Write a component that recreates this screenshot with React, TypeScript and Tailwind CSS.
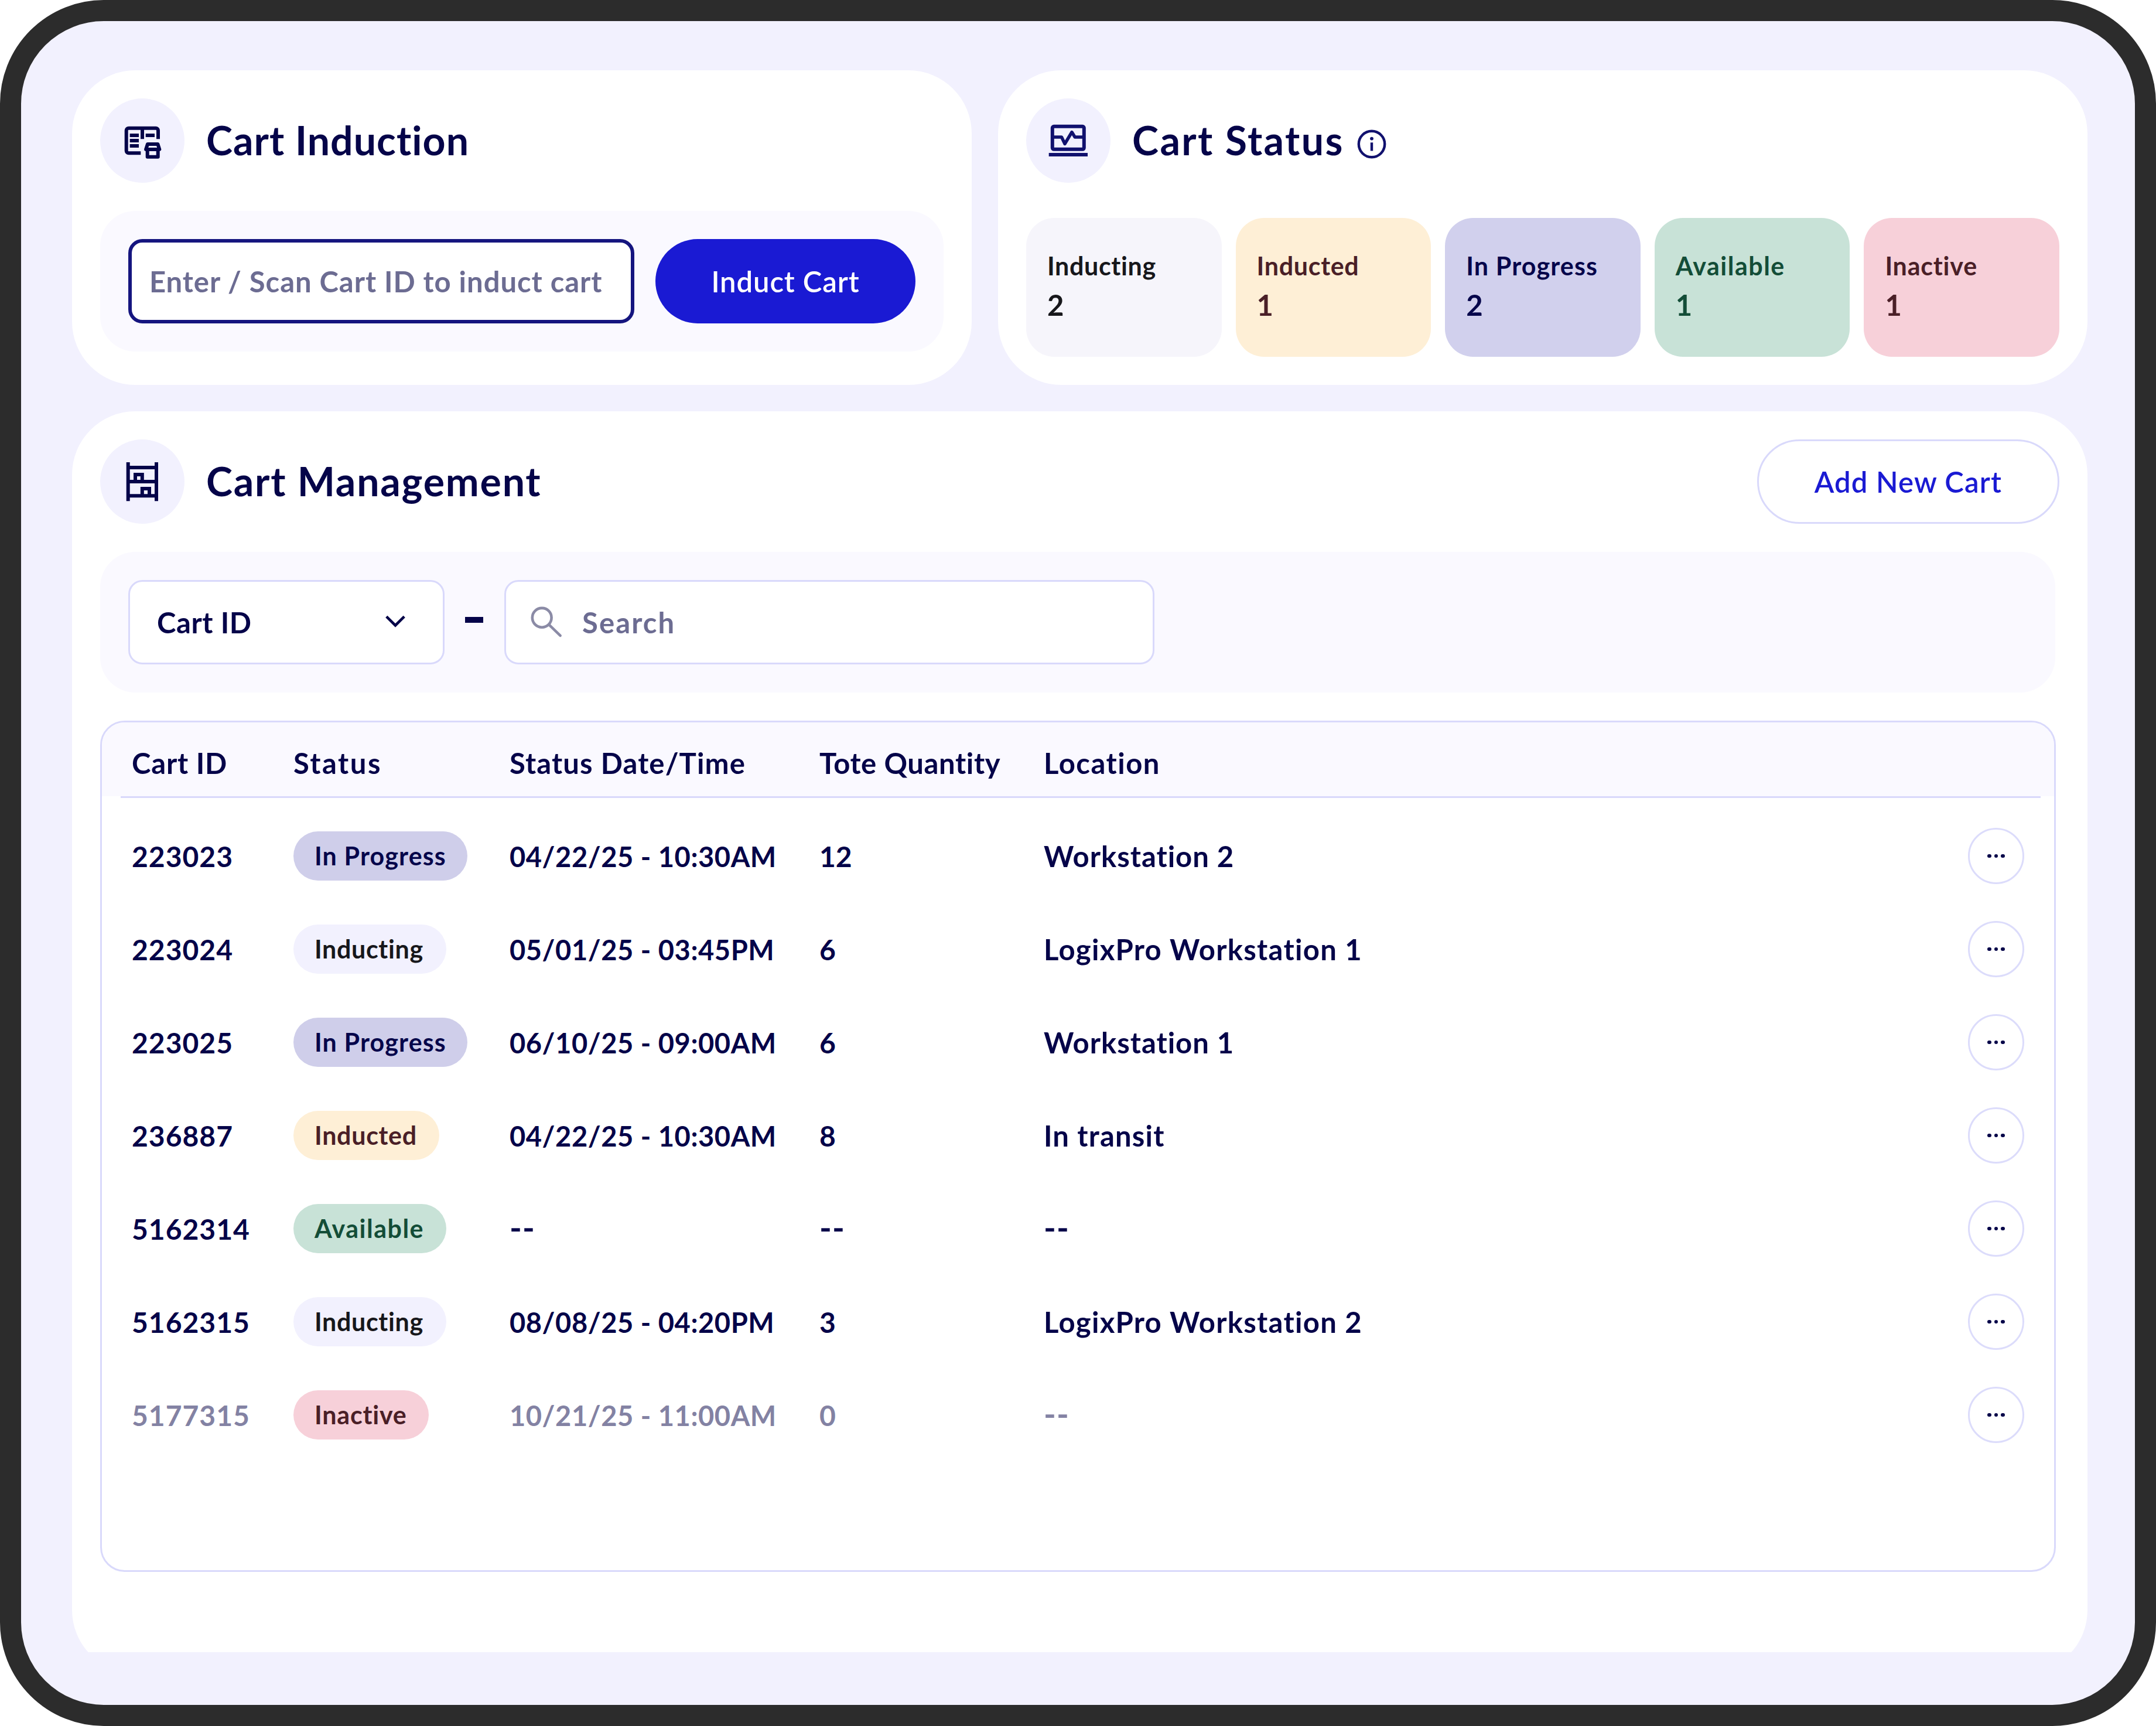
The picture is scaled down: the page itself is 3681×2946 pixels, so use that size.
import type { ReactNode } from 'react';

type StatusName = 'Inducting' | 'Inducted' | 'In Progress' | 'Available' | 'Inactive';

const statusText: Record<StatusName, string> = {
  Inducting: 'text-[#17171b] tracking-[0.65px]',
  Inducted: 'text-[#4a1f27] tracking-[0.7px]',
  'In Progress': 'text-[#06064b] tracking-[1.15px]',
  Available: 'text-[#134d37] tracking-[1.5px]',
  Inactive: 'text-[#4a1f27] tracking-[0.8px]',
};

const cardColor: Record<StatusName, string> = {
  Inducting: 'bg-[#f6f5fb]',
  Inducted: 'bg-[#feefd6]',
  'In Progress': 'bg-[#d1d0ed]',
  Available: 'bg-[#c8e2d7]',
  Inactive: 'bg-[#f7d0d9]',
};

const pillColor: Record<StatusName, string> = {
  Inducting: 'bg-[#f2f1fe] w-[261px]',
  Inducted: 'bg-[#feefd6] w-[249px]',
  'In Progress': 'bg-[#cfceea] w-[297px]',
  Available: 'bg-[#c8e2d7] w-[261px]',
  Inactive: 'bg-[#f7d0d9] w-[231px]',
};

const cards: { name: StatusName; count: number }[] = [
  { name: 'Inducting', count: 2 },
  { name: 'Inducted', count: 1 },
  { name: 'In Progress', count: 2 },
  { name: 'Available', count: 1 },
  { name: 'Inactive', count: 1 },
];

const columns = [
  { label: 'Cart ID', tracking: 'tracking-[0.8px]' },
  { label: 'Status', tracking: 'tracking-[2.5px]' },
  { label: 'Status Date/Time', tracking: 'tracking-[1.13px]' },
  { label: 'Tote Quantity', tracking: 'tracking-[0.63px]' },
  { label: 'Location', tracking: 'tracking-[1.5px]' },
];

const rows: { id: string; status: StatusName; date: string; qty: string; location: string; locationTracking: string }[] = [
  { id: '223023', status: 'In Progress', date: '04/22/25 - 10:30AM', qty: '12', location: 'Workstation 2', locationTracking: 'tracking-[1px]' },
  { id: '223024', status: 'Inducting', date: '05/01/25 - 03:45PM', qty: '6', location: 'LogixPro Workstation 1', locationTracking: 'tracking-[1.3px]' },
  { id: '223025', status: 'In Progress', date: '06/10/25 - 09:00AM', qty: '6', location: 'Workstation 1', locationTracking: 'tracking-[1px]' },
  { id: '236887', status: 'Inducted', date: '04/22/25 - 10:30AM', qty: '8', location: 'In transit', locationTracking: 'tracking-[1.2px]' },
  { id: '5162314', status: 'Available', date: '--', qty: '--', location: '--', locationTracking: '' },
  { id: '5162315', status: 'Inducting', date: '08/08/25 - 04:20PM', qty: '3', location: 'LogixPro Workstation 2', locationTracking: 'tracking-[1.3px]' },
  { id: '5177315', status: 'Inactive', date: '10/21/25 - 11:00AM', qty: '0', location: '--', locationTracking: '' },
];

const gridCols = 'grid grid-cols-[276px_369px_529px_383px_1fr_auto] items-center pl-[51px] pr-[51px]';

function InductionIcon() {
  return (
    <svg viewBox="0 0 144 144" className="size-36" fill="none" stroke="#050449" strokeWidth="6">
      <path d="M69.3 93.3H48.7a4 4 0 0 1-4-4V54.7a4 4 0 0 1 4-4H95a4 4 0 0 1 4 4V69.3" />
      <path d="M72 50.7V69.3M50.7 63H66M50.7 72H66M50.7 81H66M77.7 63H93" />
      <path strokeLinejoin="round" d="M81 78h17.4l2.9 9H78.1zM80.7 87V99.8H98.7V87" />
    </svg>
  );
}

function StatusIcon() {
  return (
    <svg viewBox="0 0 144 144" className="size-36" fill="none" stroke="#11116e" strokeWidth="6">
      <rect x="44.8" y="47.8" width="54" height="39" rx="2.5" />
      <path d="M38.7 96H105" />
      <path strokeWidth="5.4" strokeLinejoin="round" d="M44.8 66H60.5L66 77.5L78 57.5L83.2 66H98.7" />
    </svg>
  );
}

function RackIcon() {
  return (
    <svg viewBox="0 0 144 144" className="size-36" fill="none" stroke="#050449" strokeWidth="6">
      <path d="M47.7 39V105.3M96 39V105.3M47.7 48H96M47.7 72H96M47.7 96.3H96" />
      <path d="M60 72V60H71.8V72M71.8 96V84H84V96" />
    </svg>
  );
}

function Title({ icon, tracking, children }: { icon: ReactNode; tracking: string; children: string }) {
  return (
    <div className="flex items-center gap-[37px]">
      <div className="size-36 rounded-full bg-[#f2f1fe]">{icon}</div>
      <h2 className={`pb-[3px] text-[68px] leading-[80px] font-bold ${tracking}`}>{children}</h2>
    </div>
  );
}

function Cell({ value, className }: { value: string; className: string }) {
  return <div className={value === '--' ? 'pb-1 text-[56px] leading-[72px] tracking-[1px]' : className}>{value}</div>;
}

export default function App() {
  return (
    <div className="flex h-[2946px] w-[3681px] flex-col gap-[45px] overflow-hidden rounded-[177px] border-[36px] border-[#2c2c2c] bg-[#f2f1fe] pt-[84px] pr-[81px] pl-[87px] font-['Lato',sans-serif] text-[49px] leading-[72px] font-bold whitespace-nowrap text-[#050449]">
      <div className="flex h-[537px] shrink-0 gap-[45px]">
        <section className="w-[1536px] shrink-0 rounded-[108px] bg-white p-12">
          <Title icon={<InductionIcon />} tracking="tracking-[1.05px]">Cart Induction</Title>
          <div className="mt-12 flex h-60 items-center gap-9 rounded-[60px] bg-[#faf9ff] px-12">
            <div className="flex h-36 w-[864px] items-center rounded-3xl border-[6px] border-[#15157f] bg-white pl-[30px] tracking-[0.97px] text-[#6c6c92]">
              Enter / Scan Cart ID to induct cart
            </div>
            <button className="h-36 w-[444px] rounded-full bg-[#1a1ad3] font-semibold tracking-[0.9px] text-white">Induct Cart</button>
          </div>
        </section>

        <section className="flex-1 rounded-[108px] bg-white p-12">
          <div className="flex items-center">
            <Title icon={<StatusIcon />} tracking="tracking-[2.4px]">Cart Status</Title>
            <svg viewBox="0 0 50 50" className="mt-3 ml-[22px] size-[50px]" fill="none" stroke="#11116e" strokeWidth="4.4">
              <circle cx="25" cy="25" r="22.2" />
              <path d="M25 22.3V36.5" />
              <circle cx="25" cy="15.6" r="2.9" fill="#11116e" stroke="none" />
            </svg>
          </div>
          <div className="mt-[60px] grid h-[237px] grid-cols-5 gap-6">
            {cards.map((c) => (
              <div key={c.name} className={`rounded-[48px] pt-[52px] pl-9 ${cardColor[c.name]} ${statusText[c.name]}`}>
                <div className="text-[43px] leading-[60px]">{c.name}</div>
                <div>{c.count}</div>
              </div>
            ))}
          </div>
        </section>
      </div>

      <div className="h-[2118px] shrink-0 overflow-hidden">
        <section className="h-[2154px] rounded-[108px] bg-white p-12">
          <div className="flex items-center justify-between">
            <Title icon={<RackIcon />} tracking="tracking-[1.8px]">Cart Management</Title>
            <button className="h-36 w-[516px] rounded-full border-[3px] border-[#d9d9fb] font-semibold tracking-[1.16px] text-[#1a1ad3]">Add New Cart</button>
          </div>

          <div className="mt-12 flex h-60 w-[3338px] items-center rounded-[60px] bg-[#faf9ff] px-12">
            <div className="flex h-36 w-[540px] items-center justify-between rounded-3xl border-[3px] border-[#d9d9fb] bg-white pr-[57px] pl-[46px] tracking-[0.6px]">
              Cart ID
              <svg viewBox="0 0 48 48" className="size-12" fill="none" stroke="#050449" strokeWidth="4.6">
                <path d="M8.8 14.3L24 29.5L39.2 14.3" />
              </svg>
            </div>
            <div className="mr-9 -mt-[9px] ml-[35px] h-[10px] w-[31px] bg-[#050449]" />
            <div className="flex h-36 w-[1110px] items-center gap-[31px] rounded-3xl border-[3px] border-[#d9d9fb] bg-white pl-[39px] tracking-[2.1px] text-[#6c6c92]">
              <svg viewBox="0 0 60 60" className="size-[60px]" fill="none" stroke="#8b8ba6" strokeWidth="4.6">
                <circle cx="22.2" cy="22.3" r="16.4" />
                <path strokeLinecap="round" d="M34.2 34.2L53.6 52.8" />
              </svg>
              Search
            </div>
          </div>

          <div className="mt-12 h-[1453px] w-[3339px] overflow-hidden rounded-[42px] border-[3px] border-[#d9d9fb]">
            <div className={`${gridCols} h-[126px] bg-[#faf9ff] pt-[11px]`}>
              {columns.map((c) => (
                <div key={c.label} className={c.tracking}>{c.label}</div>
              ))}
            </div>
            <div className="mr-[23px] ml-8 h-[3px] bg-[#d9d9fb]" />
            <div className="flex flex-col gap-px pt-5">
              {rows.map((r) => (
                <div key={r.id} className={`${gridCols} h-[158px] ${r.status === 'Inactive' ? 'text-[#8382a3]' : ''}`}>
                  <div className="pt-0.5 text-[48px] leading-[72px] tracking-[1px]">{r.id}</div>
                  <div className={`h-[84px] rounded-full pl-9 text-[43px] leading-[84px] ${pillColor[r.status]} ${statusText[r.status]}`}>{r.status}</div>
                  <Cell value={r.date} className="pt-0.5 text-[47px] leading-[72px] tracking-[0.55px]" />
                  <Cell value={r.qty} className="pt-0.5 text-[48px] leading-[72px]" />
                  <Cell value={r.location} className={r.locationTracking} />
                  <button className="flex size-24 items-center justify-center gap-[5px] rounded-full border-[3px] border-[#dcdcfb]">
                    <span className="size-[6.5px] rounded-full bg-[#050449]" />
                    <span className="size-[6.5px] rounded-full bg-[#050449]" />
                    <span className="size-[6.5px] rounded-full bg-[#050449]" />
                  </button>
                </div>
              ))}
            </div>
          </div>
        </section>
      </div>
    </div>
  );
}
